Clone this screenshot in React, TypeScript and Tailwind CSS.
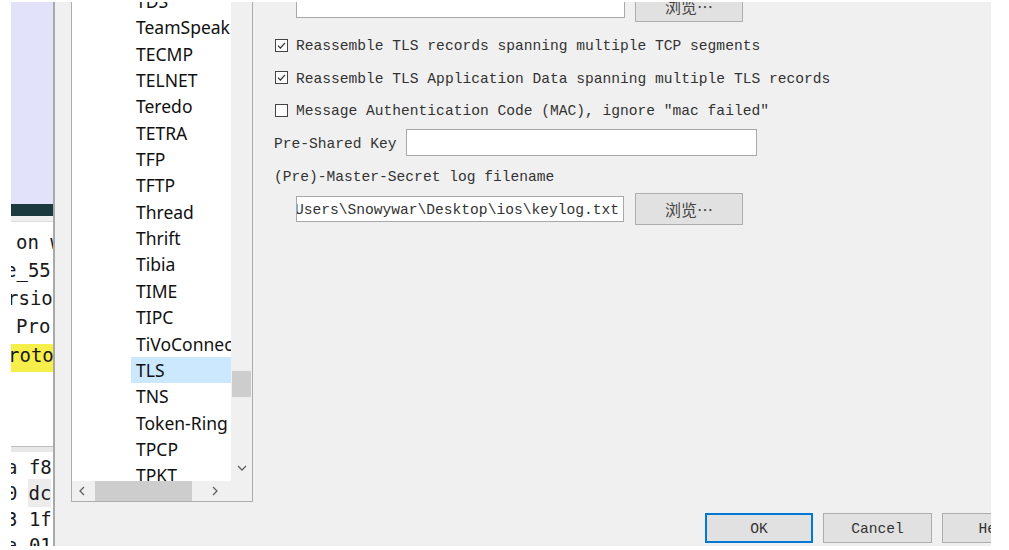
import React from "react";

const protocols = [
  "TDS",
  "TeamSpeak",
  "TECMP",
  "TELNET",
  "Teredo",
  "TETRA",
  "TFP",
  "TFTP",
  "Thread",
  "Thrift",
  "Tibia",
  "TIME",
  "TIPC",
  "TiVoConnect",
  "TLS",
  "TNS",
  "Token-Ring",
  "TPCP",
  "TPKT",
];

const mono = "font-['Liberation_Mono',monospace] text-[14.6px] text-[#333]";

function Checkbox({ checked }: { checked?: boolean }) {
  return (
    <span className="flex h-[13px] w-[13px] shrink-0 items-center justify-center border border-[#444] bg-white">
      {checked && (
        <svg width="9" height="9" viewBox="0 0 9 9">
          <path d="M1 4.6 L3.4 7 L8 1.8" fill="none" stroke="#333" strokeWidth="1.2" />
        </svg>
      )}
    </span>
  );
}

function WinButton({ label, cjk, width, primary }: { label: string; cjk?: boolean; width: string; primary?: boolean }) {
  return (
    <div
      className={`flex shrink-0 items-center justify-center bg-[#e1e1e1] ${width} ${
        primary ? "border-2 border-[#0078d7]" : "border border-[#adadad]"
      } ${cjk ? "font-['Noto_Sans_CJK_SC',sans-serif] text-[16px] text-[#444]" : mono}`}
    >
      <span className={cjk ? "" : "pt-[3px]"}>{label}</span>
    </div>
  );
}

function ChevronDown() {
  return (
    <svg width="10" height="6" viewBox="0 0 10 6">
      <path d="M1 1 L5 5 L9 1" fill="none" stroke="#606060" strokeWidth="1.3" />
    </svg>
  );
}

function ChevronSide({ dir }: { dir: "left" | "right" }) {
  return (
    <svg width="6" height="10" viewBox="0 0 6 10">
      <path
        d={dir === "left" ? "M5 1 L1 5 L5 9" : "M1 1 L5 5 L1 9"}
        fill="none"
        stroke="#606060"
        strokeWidth="1.3"
      />
    </svg>
  );
}

function BackgroundWindow() {
  const glyphs = "flex shrink-0 items-center whitespace-nowrap font-['DejaVu_Sans_Mono',monospace] text-[19px] text-[#1a1a1a]";
  const textRow = `${glyphs} h-[28px]`;
  const hexRow = `${glyphs} h-[26px] -ml-[5px]`;
  return (
    <div className="flex w-[42px] shrink-0 flex-col overflow-hidden bg-white">
      <div className="h-[202px] shrink-0 bg-[#e2e2fa]" />
      <div className="h-[12px] shrink-0 bg-[#1b3a40]" />
      <div className="h-[6px] shrink-0 border-b border-[#dcdcdc] bg-[#f0f0f0]" />
      <div className="flex shrink-0 flex-col pt-[6px]">
        <div className={`${textRow} pl-[5px]`}>on w</div>
        <div className={`${textRow} -ml-[6px]`}>e_55</div>
        <div className={`${textRow} -ml-[4px]`}>rsio</div>
        <div className={`${textRow} pl-[5px]`}>Pro</div>
        <div className={`${textRow} mt-[4px] -ml-[3px] bg-[#f6ef4a] pb-[6px]`}>rotoc</div>
      </div>
      <div className="h-[74px] shrink-0" />
      <div className="h-[6px] shrink-0 border-t border-[#bdbdbd] bg-[#e8e8e8]" />
      <div className="flex shrink-0 flex-col pt-[2px]">
        <div className={hexRow}>a f8</div>
        <div className={hexRow}>
          0 <span className="ml-[11px] bg-[#ececec]">dc</span>
        </div>
        <div className={hexRow}>3 1f</div>
        <div className={hexRow}>a 01</div>
      </div>
    </div>
  );
}

function ProtocolTree() {
  return (
    <div className="-mt-[22px] ml-[16px] flex h-[522px] w-[182px] shrink-0 flex-col border border-[#acacac] bg-white">
      <div className="flex min-h-0 flex-1">
        <div className="flex w-[159px] flex-col overflow-hidden pt-[7px] font-['Noto_Sans',sans-serif] text-[17.5px] text-[#111]">
          {protocols.map((p) => (
            <div key={p} className="flex h-[26.35px] shrink-0 items-stretch pl-[59px]">
              <div
                className={`flex flex-1 items-center whitespace-nowrap pl-[5px] ${
                  p === "TLS" ? "bg-[#cce8ff]" : ""
                }`}
              >
                {p}
              </div>
            </div>
          ))}
        </div>
        <div className="flex w-[21px] flex-col items-center bg-[#f0f0f0]">
          <div className="mt-[390px] h-[26px] w-[19px] bg-[#cdcdcd]" />
          <div className="flex-1" />
          <div className="mb-[6px] flex h-[14px] items-center justify-center">
            <ChevronDown />
          </div>
        </div>
      </div>
      <div className="flex h-[20px] bg-[#f0f0f0]">
        <div className="flex w-[159px] items-center">
          <div className="flex w-[20px] items-center justify-center">
            <ChevronSide dir="left" />
          </div>
          <div className="ml-[3px] h-[20px] w-[97px] bg-[#cdcdcd]" />
          <div className="flex-1" />
          <div className="mr-[6px] flex w-[20px] items-center justify-center">
            <ChevronSide dir="right" />
          </div>
        </div>
        <div className="w-[21px]" />
      </div>
    </div>
  );
}

function SettingsPanel() {
  return (
    <div className="ml-[21px] flex w-[717px] shrink-0 flex-col">
      <div className="-mt-[12px] flex h-[32px] items-start pl-[22px]">
        <div className="mt-[2px] h-[26px] w-[329px] border border-[#a8a8a8] bg-white" />
        <div className="ml-[10px] flex h-[32px]">
          <WinButton label="浏览…" cjk width="w-[108px]" />
        </div>
      </div>

      <div className="mt-[6.75px] flex flex-col">
        <label className={`flex h-[32.5px] items-center gap-[8px] pl-[1px] ${mono}`}>
          <Checkbox checked />
          <span className="pt-[4px]">Reassemble TLS records spanning multiple TCP segments</span>
        </label>
        <label className={`flex h-[32.5px] items-center gap-[8px] pl-[1px] ${mono}`}>
          <Checkbox checked />
          <span className="pt-[4px]">Reassemble TLS Application Data spanning multiple TLS records</span>
        </label>
        <label className={`flex h-[32.5px] items-center gap-[8px] pl-[1px] ${mono}`}>
          <Checkbox />
          <span className="pt-[4px]">Message Authentication Code (MAC), ignore ″mac failed″</span>
        </label>
      </div>

      <div className="mt-[2.75px] flex h-[27px] items-center">
        <span className={`w-[132px] whitespace-nowrap pt-[5px] ${mono}`}>Pre-Shared Key</span>
        <div className="h-[27px] w-[351px] border border-[#a8a8a8] bg-white" />
      </div>

      <div className={`mt-[10px] flex h-[20px] items-center pt-[4px] ${mono}`}>(Pre)-Master-Secret log filename</div>

      <div className="mt-[7px] flex h-[32px] items-center pl-[22px]">
        <div
          className={`flex h-[26px] w-[328px] items-center justify-end overflow-hidden whitespace-nowrap border border-[#a8a8a8] bg-white pr-[4px] pt-[3px] ${mono}`}
        >
          <span className="shrink-0">C:\Users\Snowywar\Desktop\ios\keylog.txt</span>
        </div>
        <div className="ml-[11px] flex h-[32px]">
          <WinButton label="浏览…" cjk width="w-[108px]" />
        </div>
      </div>

      <div className="flex-1" />

      <div className="mb-[3px] ml-[431px] flex h-[30px] gap-[10px]">
        <WinButton label="OK" width="w-[108px]" primary />
        <WinButton label="Cancel" width="w-[109px]" />
        <WinButton label="Help" width="w-[108px]" />
      </div>
    </div>
  );
}

export default function App() {
  return (
    <div className="flex h-[550px] w-[1009px] flex-col overflow-hidden bg-white pl-[11px] pt-[2px]">
      <div className="flex h-[544px] w-[980px]">
        <BackgroundWindow />
        <div className="w-[2px] shrink-0 bg-[#a9a9a9]" />
        <div className="flex w-[936px] shrink-0 overflow-hidden bg-[#f0f0f0]">
          <ProtocolTree />
          <SettingsPanel />
        </div>
      </div>
    </div>
  );
}
